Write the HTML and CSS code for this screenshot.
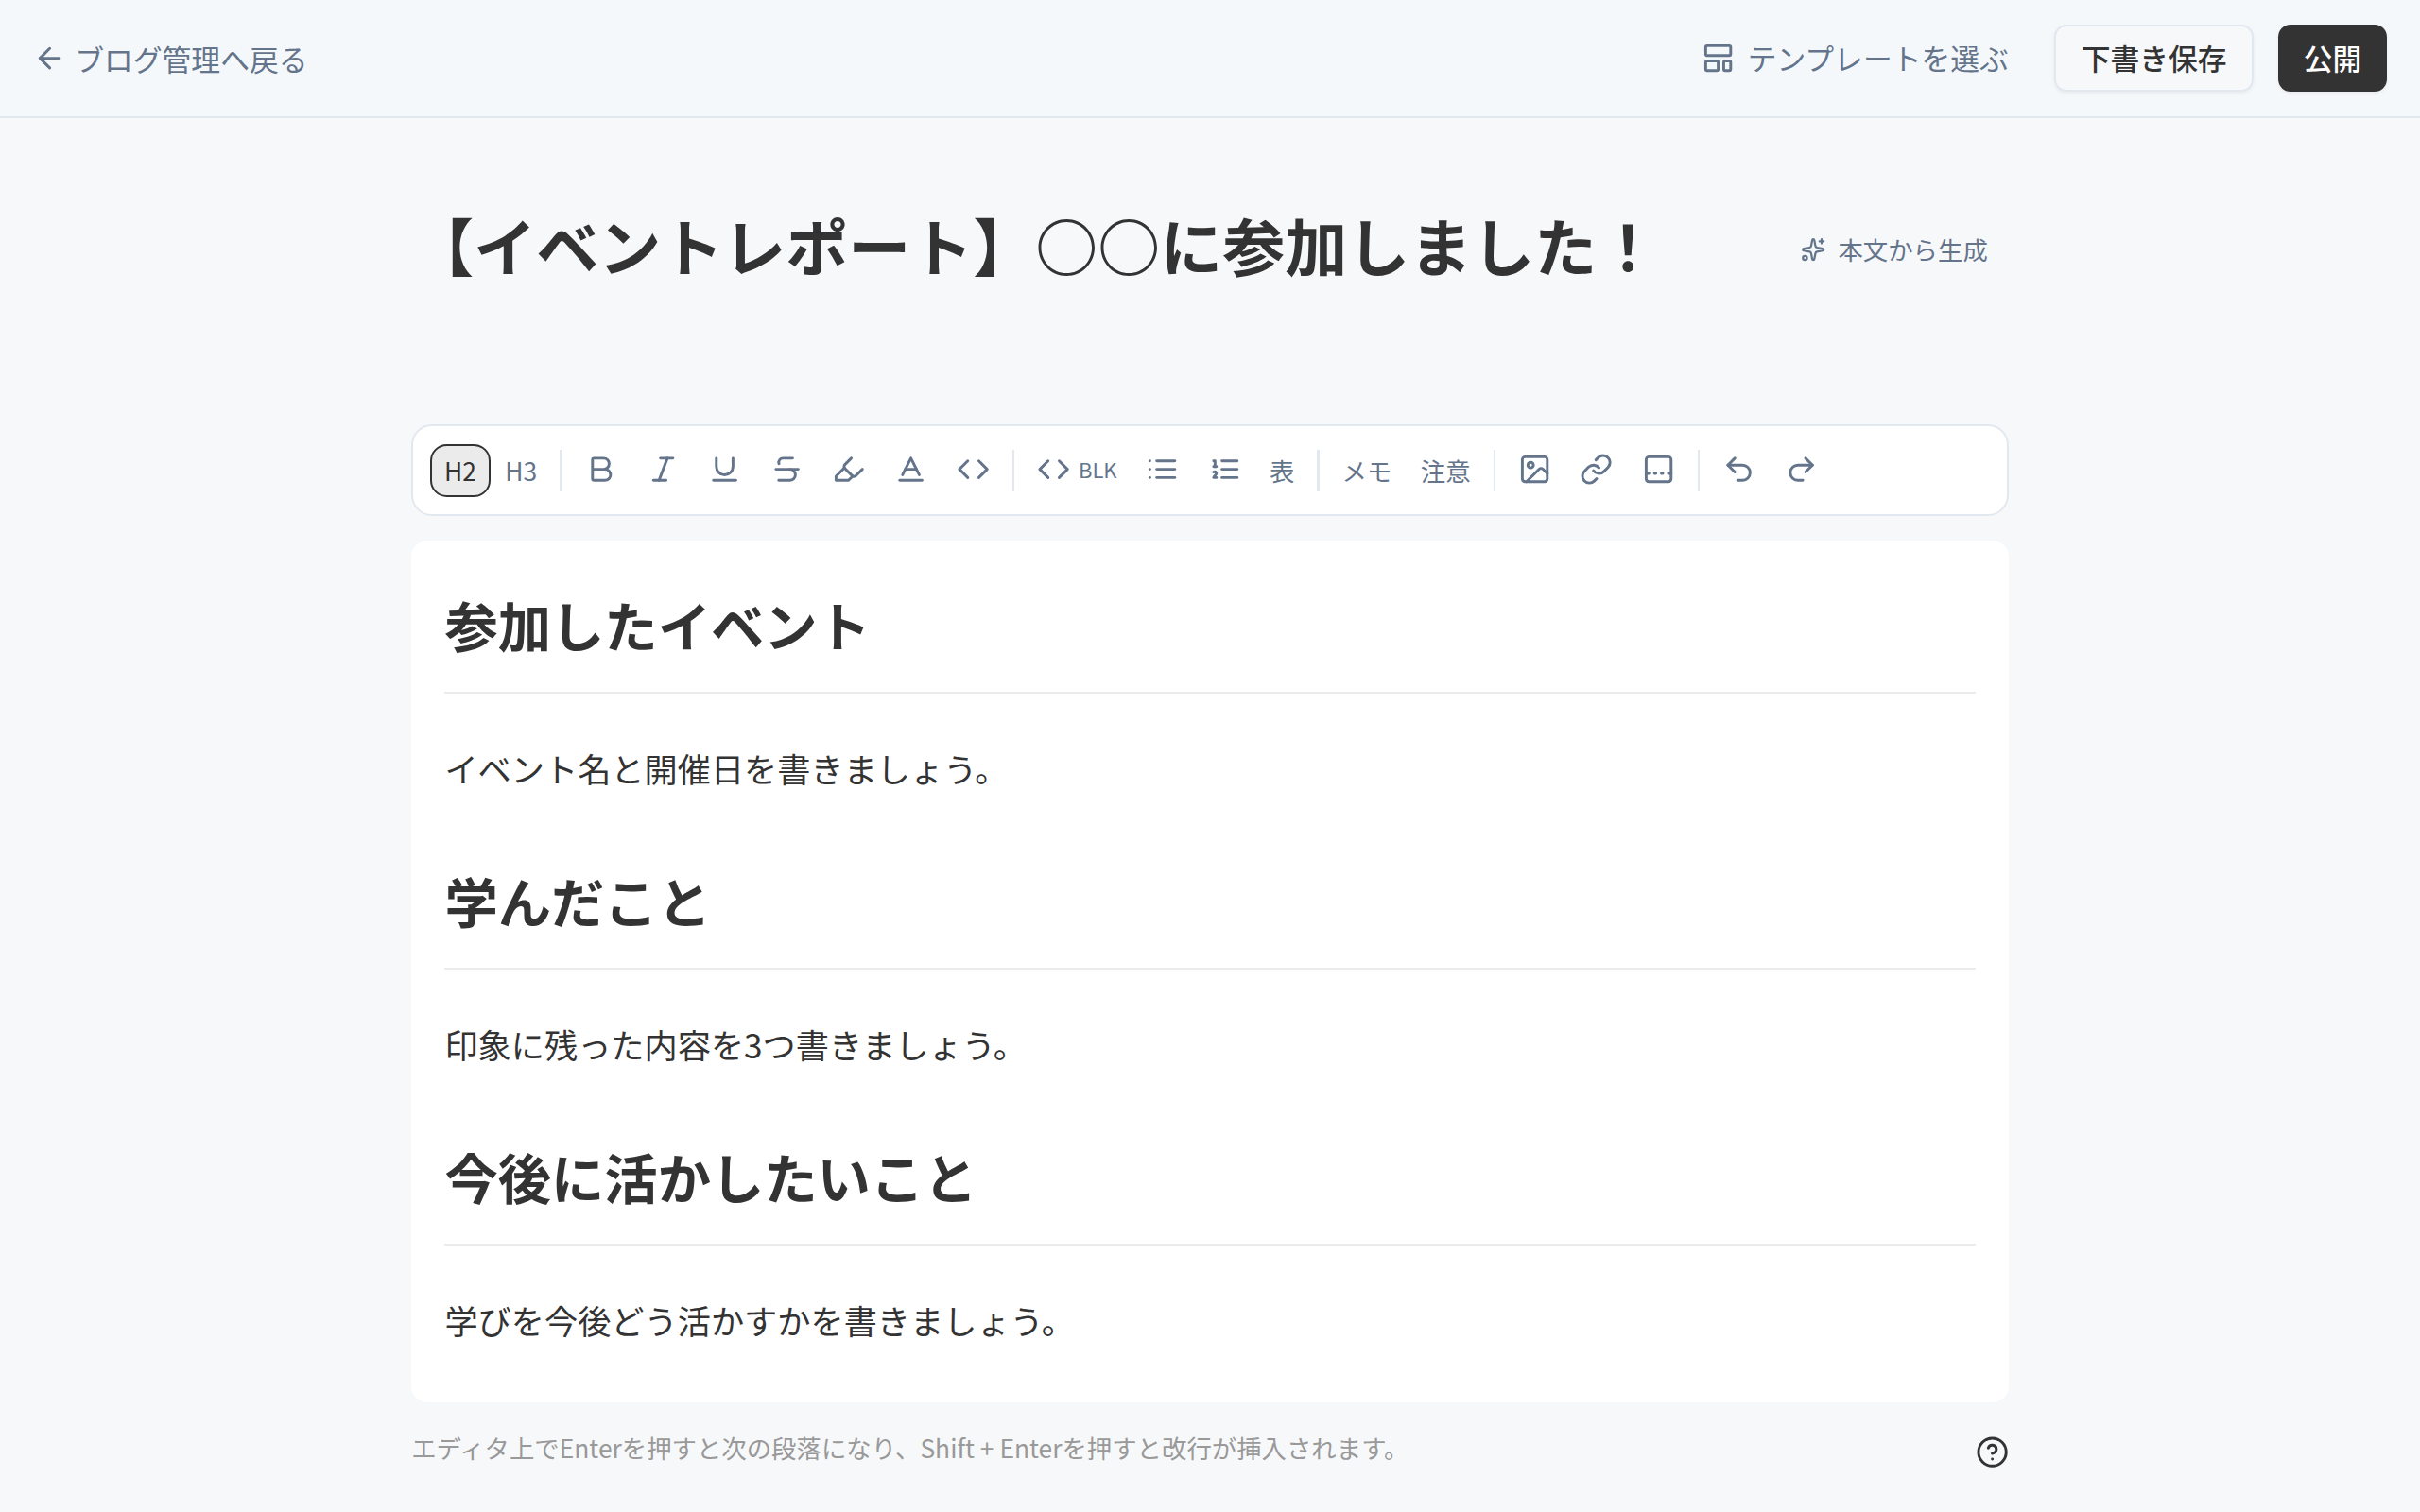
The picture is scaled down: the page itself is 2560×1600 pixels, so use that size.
FILE: index.html
```html
<!DOCTYPE html>
<html lang="ja">
<head>
    <meta charset="UTF-8">
    <meta name="viewport" content="width=device-width, initial-scale=1.0">
    <title>ブログ編集</title>
    <link rel="stylesheet" href="styles.css">
</head>
<body>
    <header class="header">
        <a href="#" class="back-link">
            <svg class="icon" viewBox="0 0 24 24"><path d="m12 19-7-7 7-7"/><path d="M19 12H5"/></svg>
            ブログ管理へ戻る
        </a>
        <div class="header-actions">
            <button class="btn btn-ghost">
                <svg class="icon" viewBox="0 0 24 24"><rect width="18" height="7" x="3" y="3" rx="1"/><rect width="9" height="7" x="3" y="14" rx="1"/><rect width="5" height="7" x="16" y="14" rx="1"/></svg>
                テンプレートを選ぶ
            </button>
            <button class="btn btn-outline">下書き保存</button>
            <button class="btn btn-primary">公開</button>
        </div>
    </header>

    <main class="container">
        <div class="title-row">
            <h1 class="title">【イベントレポート】○○に参加しました！</h1>
            <button class="btn btn-generate">
                <svg class="icon icon-small" viewBox="0 0 24 24"><path d="M11.017 2.814a1 1 0 0 1 1.966 0l1.051 5.558a2 2 0 0 0 1.594 1.594l5.558 1.051a1 1 0 0 1 0 1.966l-5.558 1.051a2 2 0 0 0-1.594 1.594l-1.051 5.558a1 1 0 0 1-1.966 0l-1.051-5.558a2 2 0 0 0-1.594-1.594l-5.558-1.051a1 1 0 0 1 0-1.966l5.558-1.051a2 2 0 0 0 1.594-1.594z"/><path d="M20 2v4"/><path d="M22 4h-4"/><circle cx="4" cy="20" r="2"/></svg>
                本文から生成
            </button>
        </div>

        <div class="toolbar">
            <button class="tool active">H2</button>
            <button class="tool">H3</button>
            <span class="separator"></span>
            <button class="tool"><svg class="icon" viewBox="0 0 24 24"><path d="M6 12h9a4 4 0 0 1 0 8H7a1 1 0 0 1-1-1V5a1 1 0 0 1 1-1h7a4 4 0 0 1 0 8"/></svg></button>
            <button class="tool"><svg class="icon" viewBox="0 0 24 24"><path d="M19 4h-9"/><path d="M14 20H5"/><path d="M15 4 9 20"/></svg></button>
            <button class="tool"><svg class="icon" viewBox="0 0 24 24"><path d="M6 4v6a6 6 0 0 0 12 0V4"/><path d="M4 20h16"/></svg></button>
            <button class="tool"><svg class="icon" viewBox="0 0 24 24"><path d="M16 4H9a3 3 0 0 0-2.83 4"/><path d="M14 12a4 4 0 0 1 0 8H6"/><path d="M4 12h16"/></svg></button>
            <button class="tool"><svg class="icon" viewBox="0 0 24 24"><path d="m9 11-6 6v3h9l3-3"/><path d="m22 12-4.6 4.6a2 2 0 0 1-2.8 0l-5.2-5.2a2 2 0 0 1 0-2.8L14 4"/></svg></button>
            <button class="tool"><svg class="icon" viewBox="0 0 24 24"><path d="M4 20h16"/><path d="m6 16 6-12 6 12"/><path d="M8 12h8"/></svg></button>
            <button class="tool"><svg class="icon" viewBox="0 0 24 24"><path d="m16 18 6-6-6-6"/><path d="m8 6-6 6 6 6"/></svg></button>
            <span class="separator"></span>
            <button class="tool">
                <svg class="icon" viewBox="0 0 24 24"><path d="m16 18 6-6-6-6"/><path d="m8 6-6 6 6 6"/></svg>
                <span class="tool-label">BLK</span>
            </button>
            <button class="tool"><svg class="icon" viewBox="0 0 24 24"><path d="M3 12h.01"/><path d="M3 18h.01"/><path d="M3 6h.01"/><path d="M8 12h13"/><path d="M8 18h13"/><path d="M8 6h13"/></svg></button>
            <button class="tool"><svg class="icon" viewBox="0 0 24 24"><path d="M10 12h11"/><path d="M10 18h11"/><path d="M10 6h11"/><path d="M4 10h2"/><path d="M4 6h1v4"/><path d="M6 18H4c0-1 2-2 2-3s-1-1.5-2-1"/></svg></button>
            <button class="tool">表</button>
            <span class="separator"></span>
            <button class="tool">メモ</button>
            <button class="tool">注意</button>
            <span class="separator"></span>
            <button class="tool"><svg class="icon" viewBox="0 0 24 24"><rect width="18" height="18" x="3" y="3" rx="2" ry="2"/><circle cx="9" cy="9" r="2"/><path d="m21 15-3.086-3.086a2 2 0 0 0-2.828 0L6 21"/></svg></button>
            <button class="tool"><svg class="icon" viewBox="0 0 24 24"><path d="M10 13a5 5 0 0 0 7.54.54l3-3a5 5 0 0 0-7.07-7.07l-1.72 1.71"/><path d="M14 11a5 5 0 0 0-7.54-.54l-3 3a5 5 0 0 0 7.07 7.07l1.71-1.71"/></svg></button>
            <button class="tool"><svg class="icon" viewBox="0 0 24 24"><rect width="18" height="18" x="3" y="3" rx="2"/><path d="M14 15h1"/><path d="M19 15h2"/><path d="M3 15h2"/><path d="M9 15h1"/></svg></button>
            <span class="separator"></span>
            <button class="tool"><svg class="icon" viewBox="0 0 24 24"><path d="M9 14 4 9l5-5"/><path d="M4 9h10.5a5.5 5.5 0 0 1 5.5 5.5a5.5 5.5 0 0 1-5.5 5.5H11"/></svg></button>
            <button class="tool"><svg class="icon" viewBox="0 0 24 24"><path d="m15 14 5-5-5-5"/><path d="M20 9H9.5A5.5 5.5 0 0 0 4 14.5A5.5 5.5 0 0 0 9.5 20H13"/></svg></button>
        </div>

        <article class="editor" contenteditable="true" spellcheck="false">
            <h2>参加したイベント</h2>
            <p>イベント名と開催日を書きましょう。</p>
            <h2>学んだこと</h2>
            <p>印象に残った内容を3つ書きましょう。</p>
            <h2>今後に活かしたいこと</h2>
            <p>学びを今後どう活かすかを書きましょう。</p>
        </article>

        <div class="editor-footer">
            <p class="hint">エディタ上でEnterを押すと次の段落になり、Shift + Enterを押すと改行が挿入されます。</p>
            <svg class="icon help-icon" viewBox="0 0 24 24"><circle cx="12" cy="12" r="10"/><path d="M9.09 9a3 3 0 0 1 5.83 1c0 2-3 3-3 3"/><path d="M12 17h.01"/></svg>
        </div>
    </main>
</body>
</html>
```
FILE: styles.css
```css
* {
    margin: 0;
    padding: 0;
    box-sizing: border-box;
}

html {
    font-size: 35.2px;
}

body {
    font-family: "Noto Sans CJK JP", sans-serif;
    background: #f7f8fa;
    color: #333;
    height: 100vh;
    overflow: hidden;
}

button {
    font-family: inherit;
    background: none;
    border: none;
    cursor: pointer;
}

.icon {
    width: 1rem;
    height: 1rem;
    flex-shrink: 0;
    fill: none;
    stroke: currentColor;
    stroke-width: 2;
    stroke-linecap: round;
    stroke-linejoin: round;
}

.icon-small {
    width: 0.75rem;
    height: 0.75rem;
}

/* Header */
.header {
    display: flex;
    align-items: center;
    justify-content: space-between;
    height: 125px;
    padding: 0 1rem;
    background: #f4f8fb;
    border-bottom: 2px solid #e2e8f0;
}

.back-link {
    display: flex;
    align-items: center;
    gap: 0.25rem;
    font-size: 0.875rem;
    line-height: 1.25rem;
    color: #64748b;
    text-decoration: none;
}

.header-actions {
    display: flex;
    align-items: center;
    gap: 0.75rem;
}

.btn {
    display: flex;
    align-items: center;
    gap: 0.375rem;
    height: 2rem;
    padding: 0 0.75rem;
    border-radius: 0.375rem;
    font-size: 0.875rem;
    font-weight: 500;
    line-height: 1.25rem;
    white-space: nowrap;
}

.btn-ghost {
    padding: 0 0.625rem;
    font-weight: 400;
    color: #64748b;
}

.btn-outline {
    background: #f7f8fa;
    border: 2px solid #e2e8f0;
    color: #333;
    box-shadow: 0 2px 4px rgba(0, 0, 0, 0.05);
}

.btn-primary {
    background: #333;
    color: #fff;
    box-shadow: 0 2px 4px rgba(0, 0, 0, 0.05);
}

.btn-generate {
    margin-top: 2px;
    padding: 0 0.625rem;
    font-size: 0.75rem;
    font-weight: 400;
    color: #64748b;
}

/* Title */
.container {
    width: 48rem;
    margin: 0 auto;
    padding-top: 88px;
}

.title-row {
    display: flex;
    align-items: center;
    justify-content: space-between;
    height: 101px;
    margin-bottom: 135px;
}

.title {
    font-size: 1.875rem;
    font-weight: 700;
    line-height: 2.25rem;
    padding-bottom: 0.27rem;
}

/* Toolbar */
.toolbar {
    display: flex;
    align-items: center;
    height: 97px;
    padding: 1px 0.5rem 0;
    background: #fff;
    border: 2px solid #e2e8f0;
    border-radius: 0.625rem;
}

.tool {
    display: flex;
    align-items: center;
    gap: 0.25rem;
    padding: 0.25rem 0.375rem;
    border: 2px solid transparent;
    border-radius: 0.5rem;
    font-size: 0.75rem;
    line-height: 1rem;
    color: #64748b;
}

.tool .icon {
    margin-top: -0.06rem;
}

.tool.active {
    background: #ebebeb;
    border-color: #333;
    color: #333;
}

.tool-label {
    font-size: 0.625rem;
    margin-top: -0.06rem;
}

.separator {
    width: 0.0625rem;
    height: 1.25rem;
    margin: 0 0.25rem;
    background: #e2e8f0;
}

/* Editor */
.editor {
    height: 912px;
    margin-top: 26px;
    padding: 47px 1rem 0;
    background: #fff;
    border-radius: 0.5rem;
    outline: none;
}

.editor h2 {
    font-size: 1.6rem;
    font-weight: 700;
    line-height: 84px;
    padding-bottom: 29px;
    border-bottom: 2px solid #ebebeb;
    margin-bottom: 47px;
}

.editor p {
    font-size: 1rem;
    line-height: 63px;
}

.editor p + h2 {
    margin-top: 67px;
}

.editor-footer {
    display: flex;
    align-items: flex-start;
    justify-content: space-between;
    padding-top: 30px;
}

.hint {
    font-size: 0.75rem;
    line-height: 1rem;
    color: #999;
}

.help-icon {
    margin-top: 0.13rem;
    color: #333;
}
```
